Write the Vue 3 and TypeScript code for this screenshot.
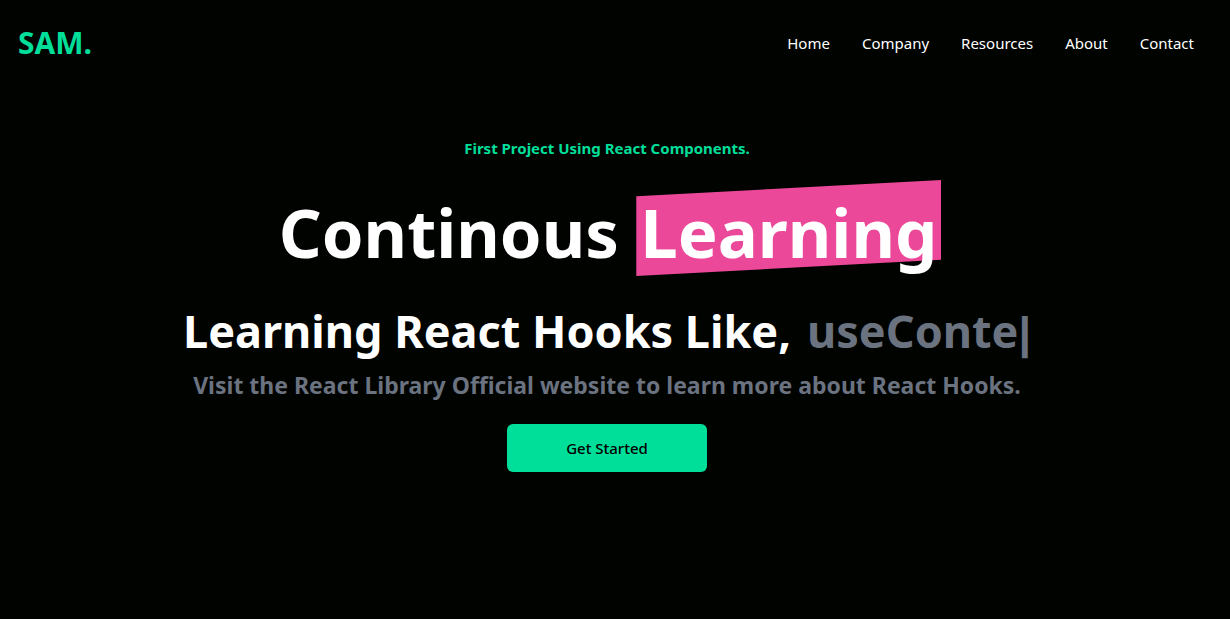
<script setup lang="ts">
interface NavItem {
  label: string
  href: string
}

const navItems: NavItem[] = [
  { label: 'Home', href: '#home' },
  { label: 'Company', href: '#company' },
  { label: 'Resources', href: '#resources' },
  { label: 'About', href: '#about' },
  { label: 'Contact', href: '#contact' },
]

const typedText = 'useConte'
</script>

<template>
  <div class="page">
    <header class="header">
      <a class="logo" href="#home">SAM.</a>
      <nav class="nav" aria-label="Main">
        <a v-for="item in navItems" :key="item.label" class="nav-link" :href="item.href">{{ item.label }}</a>
      </nav>
    </header>
    <main class="hero">
      <p class="eyebrow">First Project Using React Components.</p>
      <h1 class="title">
        Continous
        <span class="highlight">Learning</span>
      </h1>
      <div class="hooks">
        <h2 class="subtitle">Learning React Hooks Like,</h2>
        <span class="typed">{{ typedText }}<span class="cursor">|</span></span>
      </div>
      <p class="note">Visit the React Library Official website to learn more about React Hooks.</p>
      <button class="cta" type="button">Get Started</button>
    </main>
  </div>
</template>

<style>
html,
body {
  background: #000300;
  margin: 0;
}
</style>

<style scoped>
.page {
  color: #fff;
  font-family: "Segoe UI", "Noto Sans", "Open Sans", sans-serif;
  font-size: 15px;
  line-height: 24px;
  padding: 0 16px 0 18px;
}

.header {
  align-items: center;
  display: flex;
  height: 86px;
  justify-content: space-between;
}

.logo {
  color: #00df9a;
  font-size: 30px;
  font-weight: 700;
  line-height: 36px;
  text-decoration: none;
}

.nav {
  display: flex;
  gap: 32px;
  padding-right: 20px;
}

.nav-link {
  color: #fff;
  text-decoration: none;
}

.hero {
  align-items: center;
  display: flex;
  flex-direction: column;
  padding: 50px 18px 48px 0;
  text-align: center;
}

.eyebrow {
  color: #00df9a;
  font-weight: 700;
  margin: 0;
}

.title {
  font-size: 67px;
  font-weight: 700;
  line-height: 72px;
  margin: 36px 0 0;
  padding-left: 6px;
}

.highlight {
  display: inline-block;
  isolation: isolate;
  padding: 0 4px;
  position: relative;
}

.highlight::before {
  background: #ec4899;
  clip-path: polygon(0 17%, 100% 0, 100% 83%, 0 100%);
  content: "";
  inset: -16px 0 -8px;
  position: absolute;
  z-index: -1;
}

.hooks {
  align-items: center;
  display: flex;
  font-size: 45px;
  font-weight: 700;
  gap: 16px;
  line-height: 48px;
  margin-top: 39px;
}

.subtitle {
  font-size: 45px;
  font-weight: 700;
  margin: 0;
}

.typed {
  color: #6b7280;
}

.cursor {
  font-family: "Liberation Sans", Arial, sans-serif;
  line-height: 0;
}

.note {
  color: #6b7280;
  font-size: 23px;
  font-weight: 700;
  line-height: 32px;
  margin: 14px 0 0;
}

.cta {
  background: #00df9a;
  border: 0;
  border-radius: 6px;
  color: #000;
  cursor: pointer;
  font-family: inherit;
  font-size: 15px;
  font-weight: 500;
  line-height: 24px;
  margin-top: 23px;
  padding: 12px 0;
  width: 200px;
}
</style>
